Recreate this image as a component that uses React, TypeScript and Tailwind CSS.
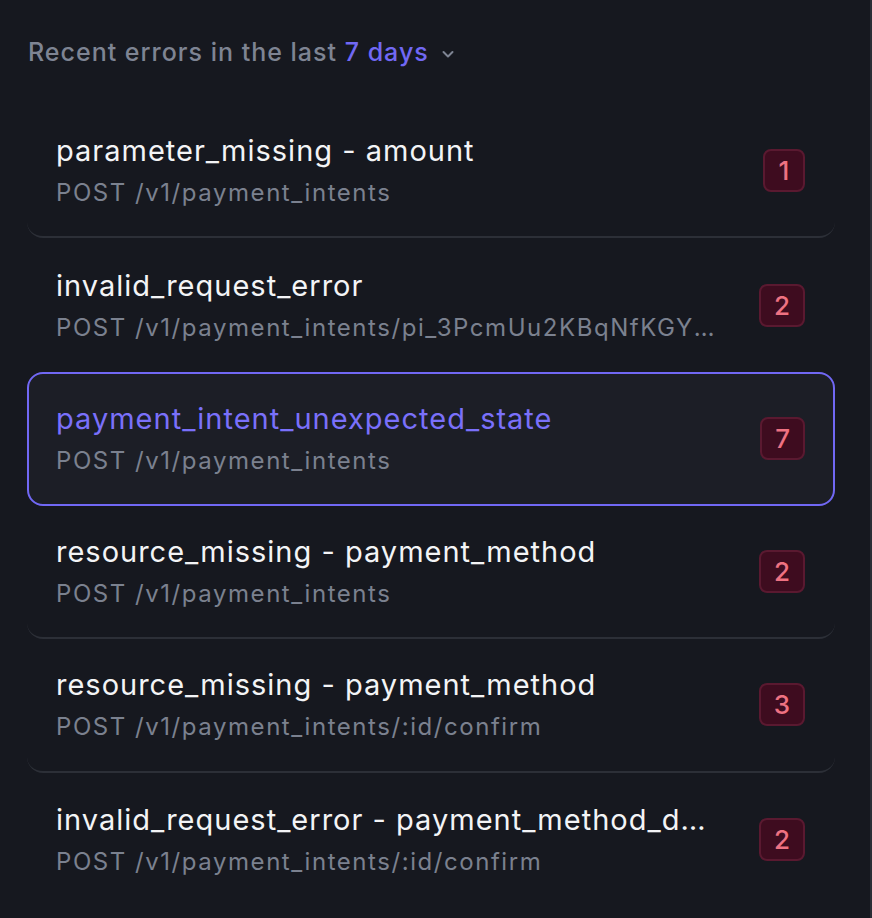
import React from 'react'

interface ErrorItem {
  title: string
  path: string
  count: number
  divider?: boolean
}

const errors: ErrorItem[] = [
  { title: 'parameter_missing - amount', path: 'POST /v1/payment_intents', count: 1, divider: true },
  { title: 'invalid_request_error', path: 'POST /v1/payment_intents/pi_3PcmUu2KBqNfKGYx8Lw0aZ1c', count: 2 },
  { title: 'payment_intent_unexpected_state', path: 'POST /v1/payment_intents', count: 7 },
  { title: 'resource_missing - payment_method', path: 'POST /v1/payment_intents', count: 2, divider: true },
  { title: 'resource_missing - payment_method', path: 'POST /v1/payment_intents/:id/confirm', count: 3, divider: true },
  { title: 'invalid_request_error - payment_method_data', path: 'POST /v1/payment_intents/:id/confirm', count: 2 },
]

const SELECTED = 2

function ErrorRow({ item, selected }: { item: ErrorItem; selected: boolean }) {
  const frame = selected
    ? 'border-2 border-[#7168f4] bg-[#1c1e26]'
    : item.divider
      ? 'border-b-2 border-[#2c2f37]'
      : ''
  return (
    <div className={`flex items-center h-[133.6px] rounded-2xl pl-[29px] pr-[30px] ${frame}`}>
      {/* Text block */}
      <div className={`flex-1 min-w-0 pr-[38px] ${selected ? '-ml-[2px]' : ''}`}>
        <div
          className={`truncate text-[29px] leading-[36px] tracking-[1px] ${selected ? 'text-[#7a70fa]' : 'text-[#f3f4f6]'}`}
        >
          {item.title}
        </div>
        <div className="truncate text-[24px] leading-[30px] mt-[9px] tracking-[1.55px] text-[#7b818f]">{item.path}</div>
      </div>

      {/* Count badge */}
      <div className={`flex shrink-0 items-center justify-center h-[43px] min-w-[42px] px-[13px] rounded-lg border-2 border-[#5a1930] bg-[#3e0c1f] text-[26px] font-medium text-[#ee7282] ${selected ? '-mr-[2px]' : ''}`}>
        {item.count}
      </div>
    </div>
  )
}

export default function App() {
  return (
    <div
      className="flex w-[872px] h-[918px] bg-[#16181f] overflow-hidden"
      style={{ fontFamily: 'Inter, "Noto Sans", sans-serif' }}
    >
      <div className="flex-1 min-w-0 pl-[27px] pr-[35px]">
        {/* Header */}
        <div className="flex items-center h-[104.8px] pt-[1px] pl-px">
          <span className="text-[25px] font-medium text-[#7e8493] tracking-[1px]">
            Recent errors in the last <span className="text-[#7168f4]">7 days</span>
          </span>
          <svg className="ml-[12px] mt-[2px]" width="14" height="14" viewBox="0 0 14 14" fill="none">
            <path d="M2.5 5l4.5 4.5 4.5-4.5" stroke="#7e8493" strokeWidth="2" strokeLinecap="round" strokeLinejoin="round" />
          </svg>
        </div>

        {/* List */}
        <div className="flex flex-col">
          {errors.map((e, i) => (
            <ErrorRow key={i} item={e} selected={i === SELECTED} />
          ))}
        </div>
      </div>

      {/* Scroll edge */}
      <div className="w-[2px] shrink-0 h-full bg-[#2a2d35]" />
    </div>
  )
}
